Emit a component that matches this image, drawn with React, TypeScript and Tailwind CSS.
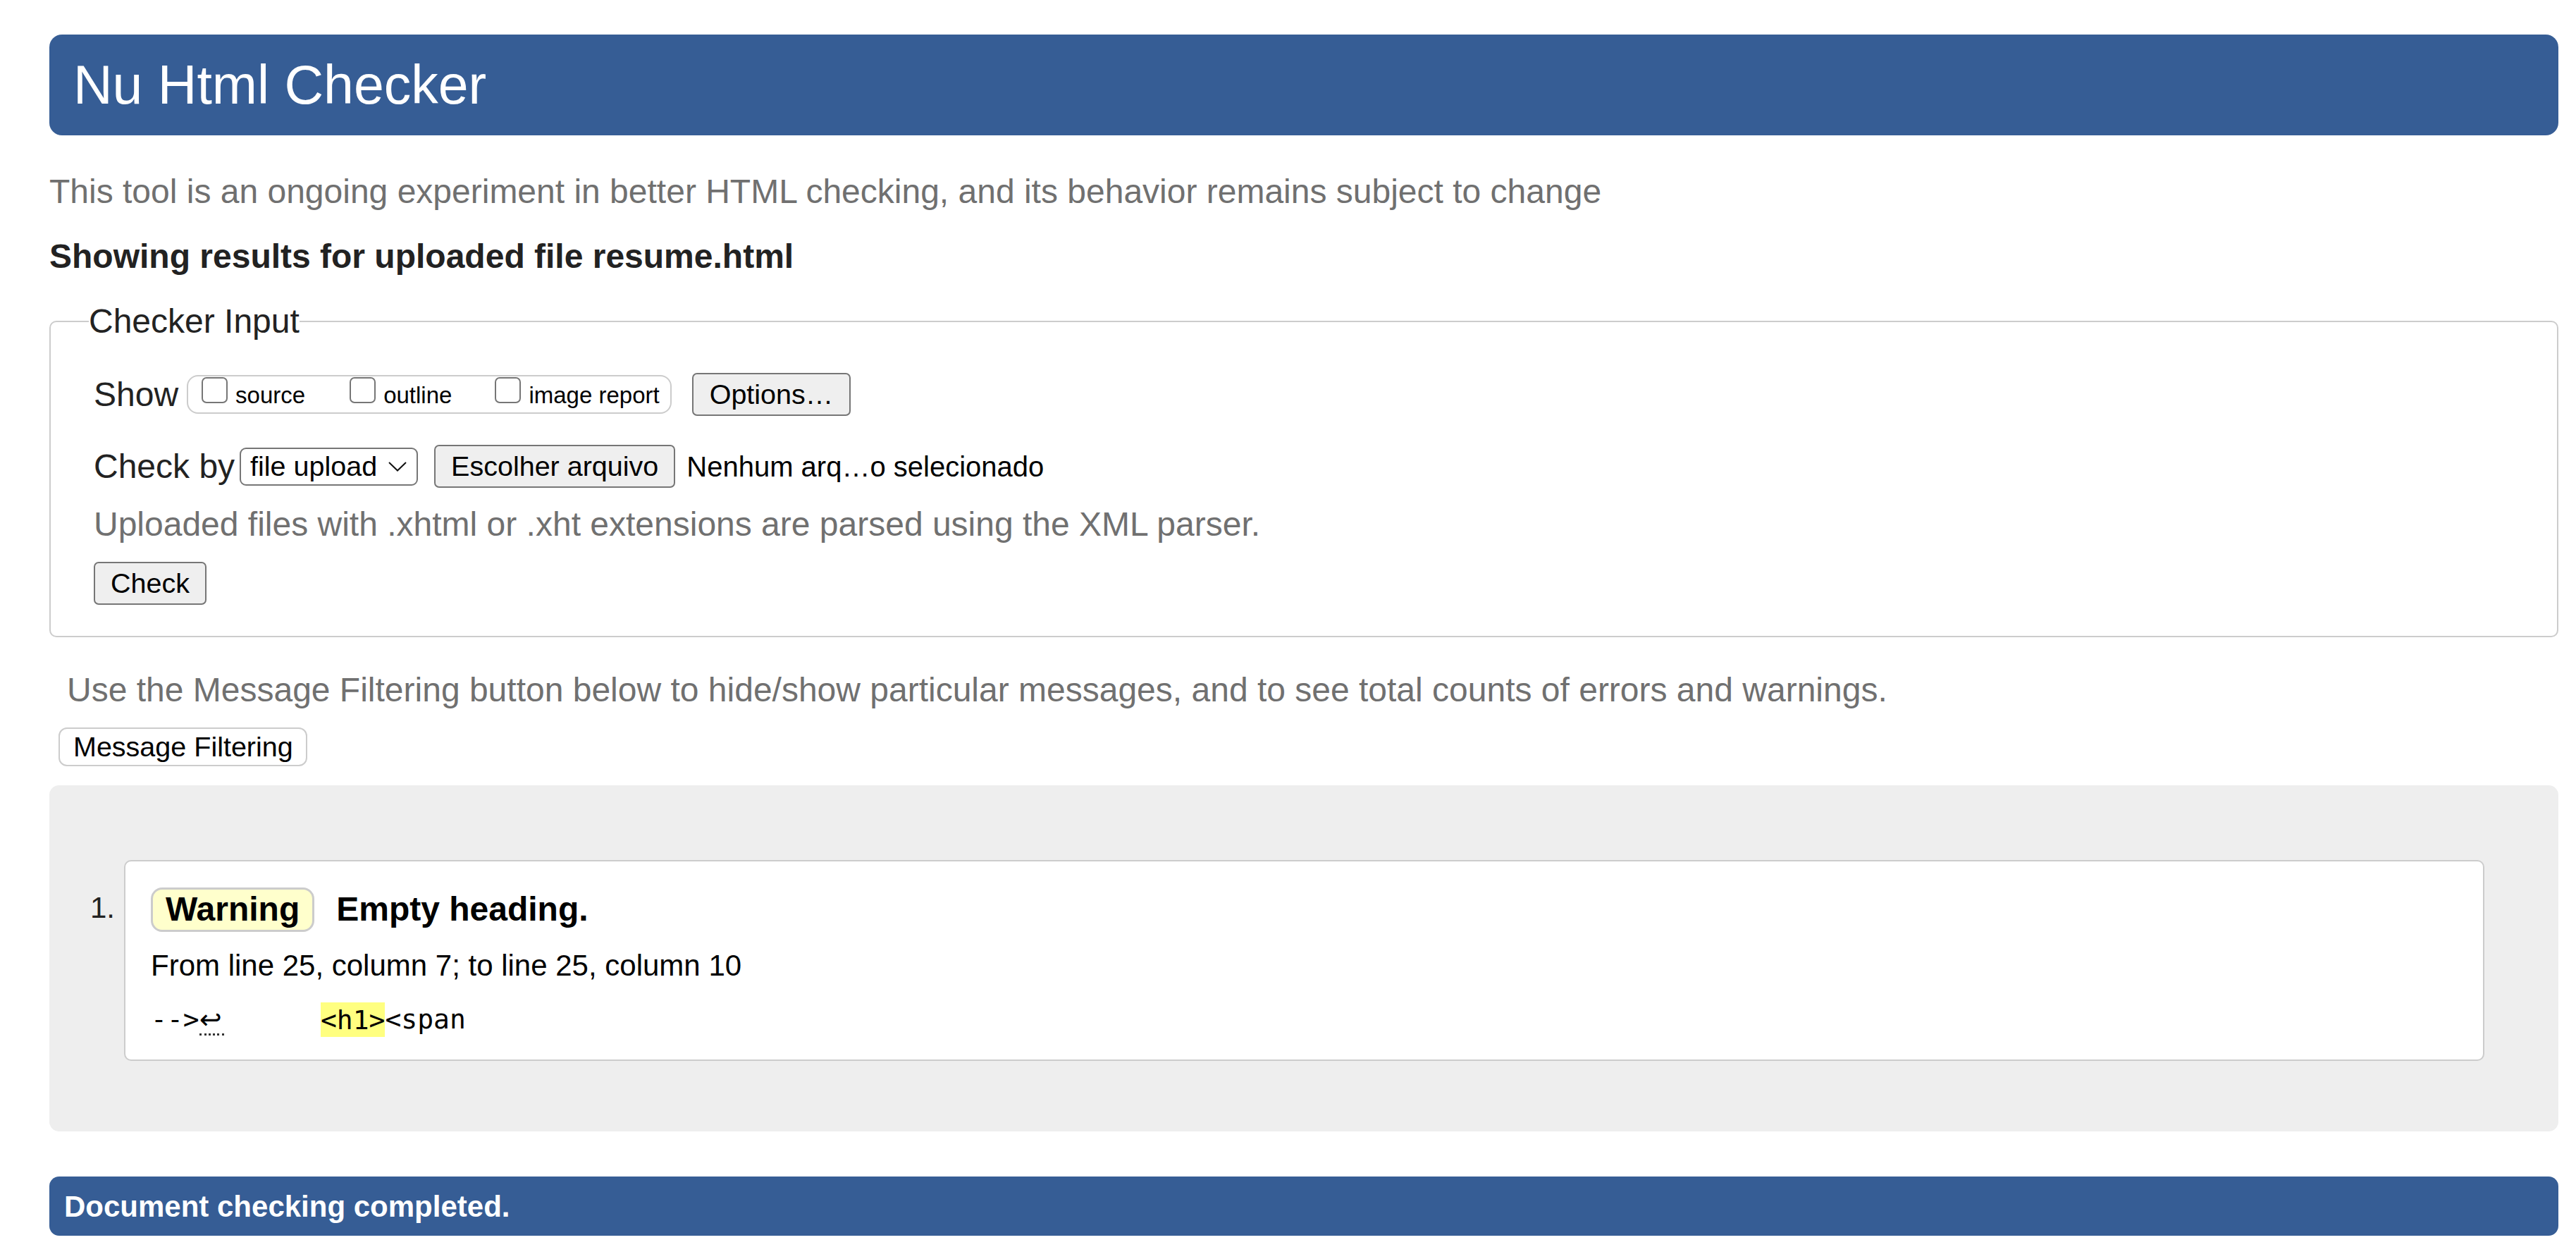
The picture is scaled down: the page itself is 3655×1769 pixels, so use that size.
import React from 'react'

const sans = "font-['Liberation_Sans',Arial,sans-serif]"

const Checkbox = ({ label }: { label: string }) => (
  <label className="flex items-end">
    <span className="w-[37px] h-[37px] border-2 border-[#767676] rounded-[7px] bg-white shrink-0" />
    <span className="ml-[11px] text-[33px] leading-[23px] text-black whitespace-nowrap">{label}</span>
  </label>
)

const Btn = ({ children, className = '' }: { children: React.ReactNode; className?: string }) => (
  <button
    type="button"
    className={`h-[61px] px-[22px] border-2 border-[#767676] rounded-[7px] bg-[#efefef] text-[39.5px] leading-none text-black whitespace-nowrap ${className}`}
  >
    {children}
  </button>
)

export default function App() {
  return (
    <div className={`${sans} bg-white min-h-[1769px] text-[#222] pt-[49px] pl-[70px]`}>
      <div className="w-[3560px] flex flex-col">
        {/* header */}
        <h1 className="h-[143px] bg-[#365d95] rounded-[18px] pl-[34px] text-white text-[77px] leading-[143px] font-normal">
          Nu Html Checker
        </h1>

        <p className="mt-[52px] text-[48px] leading-[56px] text-[#707070]">
          This tool is an ongoing experiment in better HTML checking, and its behavior remains subject to change
        </p>

        <p className="mt-[36px] text-[48px] leading-[56px] font-bold text-[#222]">
          Showing results for uploaded file resume.html
        </p>

        {/* checker input */}
        <fieldset className="mt-[36px] border-2 border-[#cccccc] rounded-[10px] pl-[54px] pb-[44px]">
          <legend className="text-[48px] leading-[56px] text-[#222]">Checker Input</legend>

          <div className="ml-[7px] pt-[45px] flex flex-col">
            <div className="h-[61px] flex items-center">
              <span className="text-[48px] text-[#222]">Show</span>
              <div className="ml-[12px] h-[55px] box-border border-2 border-[#cccccc] rounded-[16px] bg-white flex items-start pt-[1px] pl-[19px] pr-[15px]">
                <Checkbox label="source" />
                <div className="ml-[63px]">
                  <Checkbox label="outline" />
                </div>
                <div className="ml-[61px]">
                  <Checkbox label="image report" />
                </div>
              </div>
              <Btn className="ml-[29px] px-[23px]">Options…</Btn>
            </div>

            <div className="mt-[41px] h-[61px] flex items-center">
              <span className="text-[48px] text-[#222]">Check by</span>
              <div className="ml-[7px] w-[253px] h-[54px] border-2 border-[#767676] rounded-[9px] bg-white flex items-center justify-between pl-[13px] pr-[14px]">
                <span className="text-[39.5px] leading-none text-black">file upload</span>
                <svg width="26" height="14" viewBox="0 0 26 14" fill="none" stroke="#111" strokeWidth="2">
                  <polyline points="1,1 13,12.5 25,1" />
                </svg>
              </div>
              <Btn className="ml-[23px]">Escolher arquivo</Btn>
              <span className="ml-[16px] text-[40px] text-black whitespace-nowrap">Nenhum arq…o selecionado</span>
            </div>

            <p className="mt-[24px] text-[48px] leading-[56px] text-[#707070]">
              Uploaded files with .xhtml or .xht extensions are parsed using the XML parser.
            </p>

            <div className="mt-[25px]">
              <Btn>Check</Btn>
            </div>
          </div>
        </fieldset>

        <p className="mt-[47px] ml-[25px] text-[48px] leading-[56px] text-[#707070]">
          Use the Message Filtering button below to hide/show particular messages, and to see total counts of errors and warnings.
        </p>

        <div className="mt-[25px] ml-[13px]">
          <button
            type="button"
            className="h-[55px] pl-[19px] pr-[18px] border-2 border-[#cccccc] rounded-[12px] bg-white text-[39.5px] leading-none text-black"
          >
            Message Filtering
          </button>
        </div>

        {/* results */}
        <div className="mt-[27px] bg-[#eeeeee] rounded-[14px] pt-[106px] pb-[100px] pr-[105px] flex">
          <div className="w-[106px] shrink-0 text-right pr-[13px] pt-[38px] text-[42px] leading-[60px] text-[#222]">1.</div>
          <div className="flex-1 bg-white border-2 border-[#cccccc] rounded-[10px] pl-[36px] pt-[32px] pb-[33px]">
            <div className="flex items-center">
              <span className="h-[63px] flex items-center px-[18px] border-[3px] border-[#cccccc] rounded-[16px] bg-[#ffffcc] text-[48px] font-bold text-black">
                Warning
              </span>
              <span className="ml-[31px] text-[48px] font-bold text-black">Empty heading.</span>
            </div>
            <p className="mt-[20px] text-[42px] leading-[48px] text-black">
              From line 25, column 7; to line 25, column 10
            </p>
            <p className="mt-[28px] font-['DejaVu_Sans_Mono',monospace] text-[38px] leading-[48px] text-black whitespace-pre">
              {'-->'}
              <span className="inline-block w-[35px] font-['DejaVu_Sans',sans-serif] leading-[40px] border-b-[3px] border-dotted border-[#333]">↩</span>
              {'      '}
              <span className="bg-[#ffff80] py-[2.5px]">{'<h1>'}</span>
              {'<span'}
            </p>
          </div>
        </div>

        <div className="mt-[64px] h-[84px] bg-[#365d95] rounded-[14px] pl-[21px] flex items-center">
          <span className="text-white font-bold text-[42px]">Document checking completed.</span>
        </div>
      </div>
    </div>
  )
}
